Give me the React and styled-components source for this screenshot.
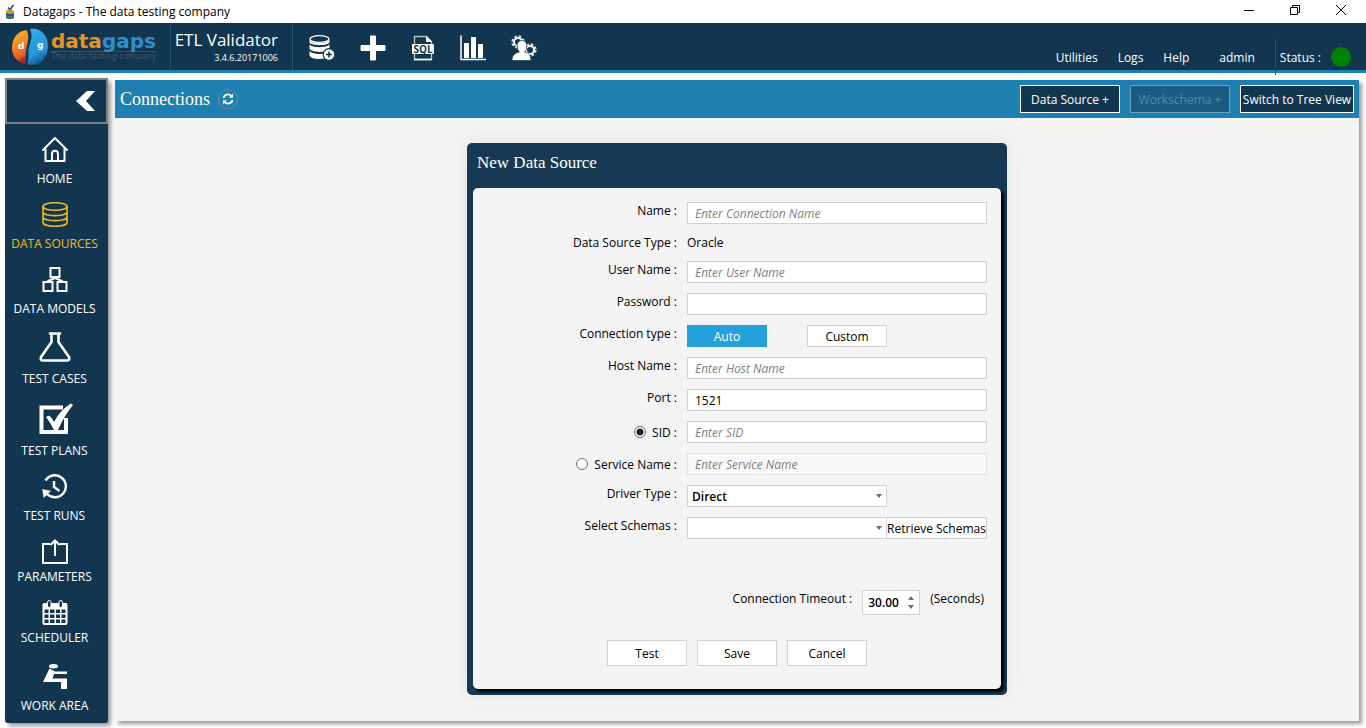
import React, { useState } from "react"

import styled, { createGlobalStyle } from "styled-components"

const GlobalStyle = createGlobalStyle`
  * {
    box-sizing: border-box;
  }
  body {
    margin: 0;
    background: #fff;
    color: #000;
    font-family: "Open Sans", "Noto Sans", sans-serif;
    font-size: 12px;
  }
  button, input, select {
    font-family: inherit;
    font-size: 12px;
    margin: 0;
  }
`

const Page = styled.div`
  display: flex;
  flex-direction: column;
  min-height: 100vh;
`

/* Window title bar */

const TitleBar = styled.div`
  display: flex;
  align-items: center;
  height: 23px;
  padding-left: 4px;
  gap: 7px;
`

const TitleText = styled.span`
  flex: 1;
  line-height: 23px;
`

const WindowButton = styled.button`
  display: flex;
  align-items: center;
  justify-content: center;
  width: 46px;
  height: 20px;
  padding: 0;
  border: none;
  background: transparent;
`

const WindowButtons = styled.div`
  display: flex;
  align-self: flex-start;
  padding-right: 2px;
`

/* Header */

const Header = styled.header`
  display: flex;
  height: 50px;
  background: #12364f;
  border-bottom: 3px solid #1e80b0;
  color: #fff;
`

const Brand = styled.div`
  display: flex;
  align-items: center;
  gap: 3px;
  width: 171px;
  padding-left: 11px;
  border-right: 1px solid #1b577a;
`

const BrandWords = styled.div`
  display: flex;
  flex-direction: column;
`

const BrandName = styled.span`
  font-family: "DejaVu Sans", sans-serif;
  font-size: 20px;
  font-weight: bold;
  line-height: 20px;
  color: #2b8fd0;
  border-bottom: 1px solid #36536a;
`

const BrandAccent = styled.span`
  color: #e8941f;
`

const Tagline = styled.span`
  font-family: "DejaVu Sans", sans-serif;
  font-size: 8px;
  line-height: 10px;
  color: #3f5466;
  white-space: nowrap;
`

const Product = styled.div`
  display: flex;
  flex-direction: column;
  align-items: flex-end;
  width: 122px;
  padding: 5px 14px 0 0;
  border-right: 1px solid #1b577a;
`

const ProductName = styled.span`
  font-size: 17px;
  line-height: 24px;
  white-space: nowrap;
`

const Version = styled.span`
  font-size: 9px;
  line-height: 12px;
`

const Toolbar = styled.div`
  display: flex;
  flex: 1;
  align-items: center;
  gap: 25px;
  padding: 3px 0 0 16px;
`

const ToolButton = styled.button`
  display: flex;
  padding: 0;
  border: none;
  background: transparent;
  color: #fff;
`

const Menu = styled.nav`
  display: flex;
  padding-top: 26px;
`

const MenuLink = styled.a`
  margin-right: ${(props) => (props.$wide ? "30px" : "20px")};
  line-height: 18px;
  color: #fff;
  text-decoration: none;
`

const Status = styled.div`
  display: flex;
  align-items: center;
  gap: 10px;
  height: 36px;
  margin-top: 16px;
  padding: 0 15px 0 4px;
  border-left: 1px solid #1b577a;
`

const StatusDot = styled.span`
  width: 20px;
  height: 20px;
  border-radius: 50%;
  background: #008000;
`

/* Workspace and sidebar */

const Workspace = styled.div`
  display: flex;
  flex: 1;
  gap: 7px;
  padding: 5px 7px 5px 5px;
`

const Sidebar = styled.aside`
  display: flex;
  flex-direction: column;
  width: 103px;
  flex-shrink: 0;
  border-radius: 3px;
  background: #12364f;
  box-shadow: 3px 3px 4px rgba(0, 0, 0, 0.4);
`

const Collapse = styled.button`
  display: flex;
  align-items: center;
  justify-content: flex-end;
  height: 46px;
  padding: 0 11px 0 0;
  border: 2px solid #808080;
  background: #12364f;
`

const NavList = styled.nav`
  display: flex;
  flex-direction: column;
  gap: 15px;
  padding: 13px 4px 9px 0;
`

const NavItem = styled.a`
  display: flex;
  flex-direction: column;
  align-items: center;
  color: ${(props) => (props.$active ? "#f0bc1b" : "#fff")};
  text-decoration: none;
`

const NavIcon = styled.span`
  display: flex;
  align-items: ${(props) => (props.$low ? "center" : "flex-start")};
  height: ${(props) => props.$height}px;
`

const NavLabel = styled.span`
  line-height: 16px;
  white-space: nowrap;
`

/* Main panel */

const Main = styled.main`
  flex: 1;
  margin: 2px 0;
  background: #f4f4f4;
  box-shadow: 3px 3px 4px rgba(0, 0, 0, 0.4);
`

const PanelBar = styled.div`
  display: flex;
  align-items: center;
  gap: 8px;
  height: 38px;
  padding: 0 5px;
  background: #1e80b0;
`

const Heading = styled.h1`
  margin: 0;
  font-family: "Liberation Serif", serif;
  font-size: 18px;
  font-weight: normal;
  color: #fff;
`

const RefreshButton = styled.button`
  display: flex;
  align-items: center;
  justify-content: center;
  width: 20px;
  height: 20px;
  margin-right: auto;
  padding: 0;
  border: 1px solid #6f8693;
  border-radius: 50%;
  background: transparent;
  color: #fff;
`

const BarButtons = styled.div`
  display: flex;
  gap: 10px;
`

const BarButton = styled.button`
  width: ${(props) => (props.$wide ? "114px" : "100px")};
  height: 28px;
  padding: 0;
  border: 1px solid #fff;
  background: #12364f;
  color: #fff;
  white-space: nowrap;
  &:disabled {
    border-color: #6ba2be;
    background: #1a5c82;
    color: #5889a5;
  }
`

/* Dialog */

const Dialog = styled.section`
  width: 540px;
  margin: 25px auto 0;
  padding: 0 6px 6px;
  border-radius: 5px;
  background: #183954;
  box-shadow: 0 0 20px rgba(0, 0, 0, 0.08);
`

const DialogTitle = styled.h2`
  height: 45px;
  margin: 0;
  padding-left: 4px;
  font-family: "Liberation Serif", serif;
  font-size: 17px;
  font-weight: normal;
  line-height: 39px;
  color: #fff;
`

const Form = styled.form`
  padding: 14px 14px 23px;
  border-radius: 5px;
  background: #f4f4f4;
  box-shadow: 3px 3px 3px #000;
`

const Fields = styled.div`
  display: grid;
  grid-template-columns: 1fr 300px;
  gap: 10px;
`

const Label = styled.label`
  display: block;
  line-height: 17px;
  text-align: right;
  white-space: nowrap;
`

const RadioLabel = styled.label`
  display: flex;
  align-items: center;
  justify-content: flex-end;
  gap: 6px;
  line-height: 17px;
  white-space: nowrap;
`

const Radio = styled.input`
  appearance: none;
  width: 12px;
  height: 12px;
  border: 1px solid #707070;
  border-radius: 50%;
  background: #fff;
  &:checked {
    background: radial-gradient(circle, #212121 3px, #fff 4px);
  }
`

const FieldValue = styled.span`
  line-height: 17px;
`

const TextInput = styled.input`
  width: 100%;
  height: 22px;
  padding: 0 7px;
  border: 1px solid #d0d0d0;
  background: #fff;
  color: #000;
  &::placeholder {
    color: #808080;
    font-style: italic;
    opacity: 1;
  }
  &:disabled {
    border-color: #e2e2e2;
    background: #f9f9f9;
  }
`

const Choices = styled.div`
  display: flex;
  gap: 40px;
`

const Button = styled.button`
  width: ${(props) => (props.$fit ? "101px" : "80px")};
  height: ${(props) => (props.$tall ? "26px" : "22px")};
  margin-left: ${(props) => (props.$fit ? "-1px" : "0")};
  padding: 0;
  border: 1px solid ${(props) => (props.$selected ? "#26a0da" : "#d0d0d0")};
  background: ${(props) => (props.$selected ? "#26a0da" : "#fff")};
  color: ${(props) => (props.$selected ? "#fff" : "#000")};
  white-space: nowrap;
`

const SelectRow = styled.div`
  display: flex;
`

const SelectBox = styled.div`
  position: relative;
  width: 200px;
`

const Select = styled.select`
  appearance: none;
  width: 100%;
  height: 22px;
  padding: 0 4px;
  border: 1px solid #d0d0d0;
  border-radius: 0;
  background: #fff;
  color: #000;
  font-weight: 600;
`

const SelectArrow = styled.svg`
  position: absolute;
  top: 9px;
  right: 5px;
  pointer-events: none;
`

const TimeoutRow = styled.div`
  display: flex;
  justify-content: flex-end;
  gap: 10px;
  margin-top: 51px;
  padding-right: 3px;
`

const Spinner = styled.div`
  display: flex;
  width: 58px;
  height: 25px;
  border: 1px solid #d0d0d0;
  background: #fff;
`

const SpinnerInput = styled.input`
  width: 40px;
  padding: 0 0 0 5px;
  border: none;
  background: transparent;
  font-weight: 600;
`

const SpinnerButtons = styled.div`
  display: flex;
  flex-direction: column;
  justify-content: center;
  gap: 1px;
`

const SpinnerButton = styled.button`
  display: flex;
  align-items: center;
  justify-content: center;
  width: 16px;
  height: 8px;
  padding: 0;
  border: none;
  background: transparent;
`

const Actions = styled.div`
  display: flex;
  justify-content: center;
  gap: 10px;
  margin-top: 25px;
`

/* Icons */

const AppIcon = () => (
  <svg width="12" height="16" viewBox="0 0 12 16">
    <path d="M2 7h8v7q-4 2-8 0z" fill="#1b4fa0" />
    <path d="M2 6.500q4-2 8 0v2.500q-4 2-8 0z" fill="#c9a528" />
    <path d="M2 11q4 2 8 0v2q-4 2-8 0z" fill="#3f8a35" />
    <path d="M4 3.500l2 2L9.500 1" fill="none" stroke="#1b4fa0" strokeWidth="1.600" />
  </svg>
)

const LogoMark = () => (
  <svg width="37" height="38" viewBox="0 0 37 38">
    <defs>
      <linearGradient id="warm" x1="0" y1="0" x2="0.300" y2="1">
        <stop offset="0" stopColor="#fbbb22" />
        <stop offset="0.600" stopColor="#f07f26" />
        <stop offset="0.850" stopColor="#e0602a" />
        <stop offset="1" stopColor="#a52a22" />
      </linearGradient>
      <linearGradient id="cool" x1="0" y1="0" x2="0.300" y2="1">
        <stop offset="0" stopColor="#2fb0e8" />
        <stop offset="0.750" stopColor="#2795d6" />
        <stop offset="1" stopColor="#165c90" />
      </linearGradient>
    </defs>
    <path d="M15.500 2C6 3 1 11 1 20c0 8 5 14 13 16 2-5 0-9 1.500-16 1.500-7 3-12 0-18z" fill="url(#warm)" />
    <path d="M19 1c11-2 18 7 18 17 0 11-7 20-17 19-2 0-3.500-1-3.500-3 2-5 0-9 1.500-15 2-7 4-11 1-18z" fill="url(#cool)" />
    <text x="7" y="21" fontFamily="DejaVu Sans" fontSize="9" fontWeight="bold" fill="#fff">d</text>
    <text x="26" y="20" fontFamily="DejaVu Sans" fontSize="9" fontWeight="bold" fill="#fff">g</text>
  </svg>
)

const DatabaseAddIcon = () => (
  <svg width="26" height="26" viewBox="0 0 26 26">
    <path d="M0.500 4.500v3C2 11 19 11 20.500 7.500v-3C19 9 2 9 0.500 4.500z" fill="#fff" />
    <ellipse cx="10.500" cy="4" rx="9.500" ry="3.300" fill="#12364f" stroke="#fff" strokeWidth="1.300" />
    <path d="M0.500 9.500v4c2 4.500 18 4.500 20 0v-4C18 13 3 13 0.500 9.500z" fill="#fff" />
    <path d="M0.500 16v4.500c2 4.500 16 5 20 0V16c-3 4-17 4-20 0z" fill="#fff" />
    <circle cx="20" cy="19.500" r="5.800" fill="#fff" stroke="#12364f" strokeWidth="1.200" />
    <path d="M17 19.500h6M20 16.500v6" stroke="#12364f" strokeWidth="1.600" />
  </svg>
)

const PlusIcon = () => (
  <svg width="26" height="26" viewBox="0 0 26 26">
    <path d="M10.500 1h5v9.500H25v5h-9.500V25h-5v-9.500H1v-5h9.500z" fill="#fff" stroke="#fff" strokeLinejoin="round" />
  </svg>
)

const SqlIcon = () => (
  <svg width="24" height="26" viewBox="0 0 24 26">
    <path d="M3.500 9V1.500h12l5 5V9M3.500 18v6.500h17V18" fill="none" stroke="#b9c5ce" strokeWidth="1.300" />
    <path d="M15 1v6h6z" fill="#fff" />
    <path d="M3 24.500h18" stroke="#fff" strokeWidth="1.500" />
    <rect x="1" y="9" width="22" height="10" rx="1" fill="#fff" />
    <text x="12" y="17.500" textAnchor="middle" fontFamily="Open Sans" fontSize="10" fontWeight="bold" fill="#12364f">SQL</text>
  </svg>
)

const ChartIcon = () => (
  <svg width="26" height="26" viewBox="0 0 26 26">
    <path d="M1 0.500V24.500h25" fill="none" stroke="#fff" strokeWidth="1.500" />
    <path d="M4 8h5v15H4zM11 2h5v21h-5zM18 9h5v14h-5z" fill="#fff" />
  </svg>
)

const UserGearsIcon = () => (
  <svg width="26" height="26" viewBox="0 0 26 26">
    <circle cx="7" cy="7" r="5.600" fill="none" stroke="#d5dde2" strokeWidth="2.200" strokeDasharray="2.600 1.800" />
    <circle cx="7" cy="7" r="4" fill="none" stroke="#f2f5f6" strokeWidth="2" />
    <circle cx="19" cy="15" r="5.600" fill="none" stroke="#d5dde2" strokeWidth="2.200" strokeDasharray="2.600 1.800" />
    <circle cx="19" cy="15" r="4" fill="none" stroke="#f2f5f6" strokeWidth="2" />
    <path d="M11 5.500c3 0 4.800 2.200 4.800 5.500 0 2.800-0.900 4.800-2.300 6 4.500 1 6.500 3 6.500 8.500H1c0-5.500 3-7.500 7.500-8.500-1.400-1.200-2.300-3.200-2.300-6 0-3.300 1.800-5.500 4.800-5.500z" fill="#fff" stroke="#12364f" strokeWidth="0.700" />
  </svg>
)

const HomeIcon = () => (
  <svg width="26" height="25" viewBox="0 0 26 25" fill="none" stroke="currentColor" strokeWidth="2" strokeLinecap="round" strokeLinejoin="round">
    <path d="M1 13L13 1l12 12M3.500 11v13h19V11M10 24v-7c0-4.500 6-4.500 6 0v7" />
  </svg>
)

const DatabaseIcon = () => (
  <svg width="26" height="25" viewBox="0 0 26 25" fill="none" stroke="currentColor" strokeWidth="1.600">
    <ellipse cx="13" cy="4.500" rx="12" ry="3.800" />
    <path d="M1 4.500v16c0 5 24 5 24 0v-16M1 10c0 4.800 24 4.800 24 0M1 15c0 4.800 24 4.800 24 0" />
  </svg>
)

const ModelsIcon = () => (
  <svg width="26" height="25" viewBox="0 0 26 25" fill="none" stroke="currentColor" strokeWidth="2">
    <path d="M8.500 1h9v9h-9zM1.500 15h9v9h-9zM15.500 15h9v9h-9zM13 10v2M6 15v-1l7-3 7 3v1" />
  </svg>
)

const FlaskIcon = () => (
  <svg width="32" height="30" viewBox="0 0 32 30" fill="none" stroke="currentColor" strokeWidth="2.600" strokeLinecap="round" strokeLinejoin="round">
    <path d="M11 1.500h10M12.500 2v8L2 25q-1 3.500 2 3.500h24q3 0 2-3.500L19.500 10V2" />
  </svg>
)

const CheckedIcon = () => (
  <svg width="36" height="33" viewBox="1 -1 36 33">
    <path d="M27 4.500H5.500v24.500h24.500V15" fill="none" stroke="currentColor" strokeWidth="4" />
    <path d="M10 14l3-1.500q3 2 5 6.500Q24 7 35 0.500l2 1.500Q28 13 22 27h-4Q14 19 10 14z" fill="currentColor" />
  </svg>
)

const HistoryIcon = () => (
  <svg width="26" height="25" viewBox="0 0 26 25" fill="none" stroke="currentColor" strokeWidth="2.400">
    <path d="M3.500 6.500A11 11 0 1 1 5 20" />
    <path d="M12 7v6l5.500 4" />
    <path d="M0.500 15.500l8 1.500-6.500 6.500z" fill="currentColor" strokeWidth="0.500" />
  </svg>
)

const ShareIcon = () => (
  <svg width="26" height="25" viewBox="0 0 26 25" fill="none" stroke="currentColor" strokeWidth="2">
    <path d="M8 5H1v19h24V5h-7M13 17V1.500M8.500 6L13 1.500 17.500 6" />
  </svg>
)

const CalendarIcon = () => (
  <svg width="26" height="25" viewBox="0 0 26 25">
    <path d="M2 3h22q1.500 0 1.500 2v18q0 2-2 2H2.500q-2 0-2-2V5q0-2 1.500-2z" fill="currentColor" />
    <path d="M2.500 9.500h4v3.500h-4zM8 9.500h4.500v3.500H8zM14 9.500h4v3.500h-4zM19.500 9.500h4v3.500h-4zM2.500 14.500h4V18h-4zM8 14.500h4.500V18H8zM14 14.500h4V18h-4zM19.500 14.500h4V18h-4zM2.500 19.500h4V23h-4zM8 19.500h4.500V23H8zM14 19.500h4V23h-4zM19.500 19.500h4V23h-4z" fill="#12364f" />
    <rect x="5.500" y="0.500" width="3.500" height="7" rx="1.700" fill="#12364f" stroke="currentColor" />
    <rect x="17" y="0.500" width="3.500" height="7" rx="1.700" fill="#12364f" stroke="currentColor" />
  </svg>
)

const DeskIcon = () => (
  <svg width="26" height="31" viewBox="0 0 26 31" fill="currentColor">
    <ellipse cx="11.500" cy="2.300" rx="4.500" ry="2.200" />
    <path d="M7.500 4.500l5.500 3h12V10H12l-1.500 4.500H25V25h-6v-7H1z" />
  </svg>
)

const ArrowDown = () => <path d="M0 0h6L3 4z" fill="#6d6d6d" />

const navItems = [
  { label: "HOME", height: 34, Icon: HomeIcon },
  { label: "DATA SOURCES", height: 34, Icon: DatabaseIcon, active: true },
  { label: "DATA MODELS", height: 34, Icon: ModelsIcon },
  { label: "TEST CASES", height: 39, Icon: FlaskIcon },
  { label: "TEST PLANS", height: 41, Icon: CheckedIcon },
  { label: "TEST RUNS", height: 34, Icon: HistoryIcon },
  { label: "PARAMETERS", height: 30, Icon: ShareIcon },
  { label: "SCHEDULER", height: 30, Icon: CalendarIcon },
  { label: "WORK AREA", height: 37, Icon: DeskIcon, low: true },
]

const tools = [
  { name: "Add data source", Icon: DatabaseAddIcon },
  { name: "New", Icon: PlusIcon },
  { name: "SQL", Icon: SqlIcon },
  { name: "Reports", Icon: ChartIcon },
  { name: "User settings", Icon: UserGearsIcon },
]

const TextField = ({ id, label, ...rest }) => (
  <>
    <Label htmlFor={id}>{label} :</Label>
    <TextInput id={id} {...rest} />
  </>
)

const RadioField = ({ id, label, checked, onChange, placeholder }) => (
  <>
    <RadioLabel>
      <Radio type="radio" name="target" checked={checked} onChange={onChange} />
      {label} :
    </RadioLabel>
    <TextInput id={id} aria-label={label} placeholder={placeholder} disabled={!checked} />
  </>
)

const SelectField = ({ id, children }) => (
  <SelectBox>
    <Select id={id}>{children}</Select>
    <SelectArrow width="6" height="4">
      <ArrowDown />
    </SelectArrow>
  </SelectBox>
)

const DataSourceForm = () => {
  const [target, setTarget] = useState("sid")
  const [mode, setMode] = useState("Auto")
  const [timeout, setTimeoutValue] = useState(30)

  return (
    <Form onSubmit={(e) => e.preventDefault()}>
      <Fields>
        <TextField id="name" label="Name" placeholder="Enter Connection Name" />
        <Label as="span">Data Source Type :</Label>
        <FieldValue>Oracle</FieldValue>
        <TextField id="user" label="User Name" placeholder="Enter User Name" />
        <TextField id="password" label="Password" type="password" />
        <Label as="span">Connection type :</Label>
        <Choices>
          {["Auto", "Custom"].map((choice) => (
            <Button
              key={choice}
              type="button"
              $selected={mode === choice}
              onClick={() => setMode(choice)}
            >
              {choice}
            </Button>
          ))}
        </Choices>
        <TextField id="host" label="Host Name" placeholder="Enter Host Name" />
        <TextField id="port" label="Port" defaultValue="1521" />
        <RadioField
          id="sid"
          label="SID"
          placeholder="Enter SID"
          checked={target === "sid"}
          onChange={() => setTarget("sid")}
        />
        <RadioField
          id="service"
          label="Service Name"
          placeholder="Enter Service Name"
          checked={target === "service"}
          onChange={() => setTarget("service")}
        />
        <Label htmlFor="driver">Driver Type :</Label>
        <SelectField id="driver">
          <option>Direct</option>
        </SelectField>
        <Label htmlFor="schemas">Select Schemas :</Label>
        <SelectRow>
          <SelectField id="schemas" />
          <Button type="button" $fit>
            Retrieve Schemas
          </Button>
        </SelectRow>
      </Fields>

      <TimeoutRow>
        <Label htmlFor="timeout">Connection Timeout :</Label>
        <Spinner>
          <SpinnerInput id="timeout" value={timeout.toFixed(2)} readOnly />
          <SpinnerButtons>
            <SpinnerButton
              type="button"
              aria-label="Increase"
              onClick={() => setTimeoutValue(timeout + 1)}
            >
              <svg width="6" height="4">
                <path d="M0 4h6L3 0z" fill="#6d6d6d" />
              </svg>
            </SpinnerButton>
            <SpinnerButton
              type="button"
              aria-label="Decrease"
              onClick={() => setTimeoutValue(Math.max(0, timeout - 1))}
            >
              <svg width="6" height="4">
                <ArrowDown />
              </svg>
            </SpinnerButton>
          </SpinnerButtons>
        </Spinner>
        <FieldValue>(Seconds)</FieldValue>
      </TimeoutRow>

      <Actions>
        <Button type="button" $tall>Test</Button>
        <Button type="submit" $tall>Save</Button>
        <Button type="button" $tall>Cancel</Button>
      </Actions>
    </Form>
  )
}

const App = () => (
  <Page>
    <GlobalStyle />
    <TitleBar>
      <AppIcon />
      <TitleText>Datagaps - The data testing company</TitleText>
      <WindowButtons>
        <WindowButton aria-label="Minimize">
          <svg width="10" height="10"><path d="M0 5.500h10" stroke="#000" /></svg>
        </WindowButton>
        <WindowButton aria-label="Restore">
          <svg width="10" height="10" fill="none" stroke="#000">
            <path d="M0.500 2.500h7v7h-7zM2.500 2.500v-2h7v7h-2" />
          </svg>
        </WindowButton>
        <WindowButton aria-label="Close">
          <svg width="10" height="10"><path d="M0 0l10 10M10 0L0 10" stroke="#000" /></svg>
        </WindowButton>
      </WindowButtons>
    </TitleBar>

    <Header>
      <Brand>
        <LogoMark />
        <BrandWords>
          <BrandName>
            <BrandAccent>data</BrandAccent>gaps
          </BrandName>
          <Tagline>The data testing company</Tagline>
        </BrandWords>
      </Brand>
      <Product>
        <ProductName>ETL Validator</ProductName>
        <Version>3.4.6.20171006</Version>
      </Product>
      <Toolbar>
        {tools.map(({ name, Icon }) => (
          <ToolButton key={name} aria-label={name}>
            <Icon />
          </ToolButton>
        ))}
      </Toolbar>
      <Menu>
        <MenuLink href="#utilities">Utilities</MenuLink>
        <MenuLink href="#logs">Logs</MenuLink>
        <MenuLink href="#help" $wide>Help</MenuLink>
        <MenuLink href="#admin">admin</MenuLink>
      </Menu>
      <Status>
        Status :
        <StatusDot />
      </Status>
    </Header>

    <Workspace>
      <Sidebar>
        <Collapse aria-label="Collapse menu">
          <svg width="20" height="20" viewBox="0 0 20 20">
            <path d="M12 0h8l-9 10 9 10h-8L1 10z" fill="#fff" />
          </svg>
        </Collapse>
        <NavList>
          {navItems.map(({ label, height, Icon, active, low }) => (
            <NavItem key={label} href="#nav" $active={active}>
              <NavIcon $height={height} $low={low}>
                <Icon />
              </NavIcon>
              <NavLabel>{label}</NavLabel>
            </NavItem>
          ))}
        </NavList>
      </Sidebar>

      <Main>
        <PanelBar>
          <Heading>Connections</Heading>
          <RefreshButton aria-label="Refresh">
            <svg width="12" height="12" viewBox="0 0 12 12" fill="none" stroke="currentColor" strokeWidth="1.800">
              <path d="M1.500 5A4.600 4.600 0 0 1 9.500 3M10.500 7A4.600 4.600 0 0 1 2.500 9" />
              <path d="M11 0.800v4H7zM1 11.200v-4h4z" fill="currentColor" stroke="none" />
            </svg>
          </RefreshButton>
          <BarButtons>
            <BarButton>Data Source +</BarButton>
            <BarButton disabled>Workschema +</BarButton>
            <BarButton $wide>Switch to Tree View</BarButton>
          </BarButtons>
        </PanelBar>
        <Dialog>
          <DialogTitle>New Data Source</DialogTitle>
          <DataSourceForm />
        </Dialog>
      </Main>
    </Workspace>
  </Page>
)

export default App
